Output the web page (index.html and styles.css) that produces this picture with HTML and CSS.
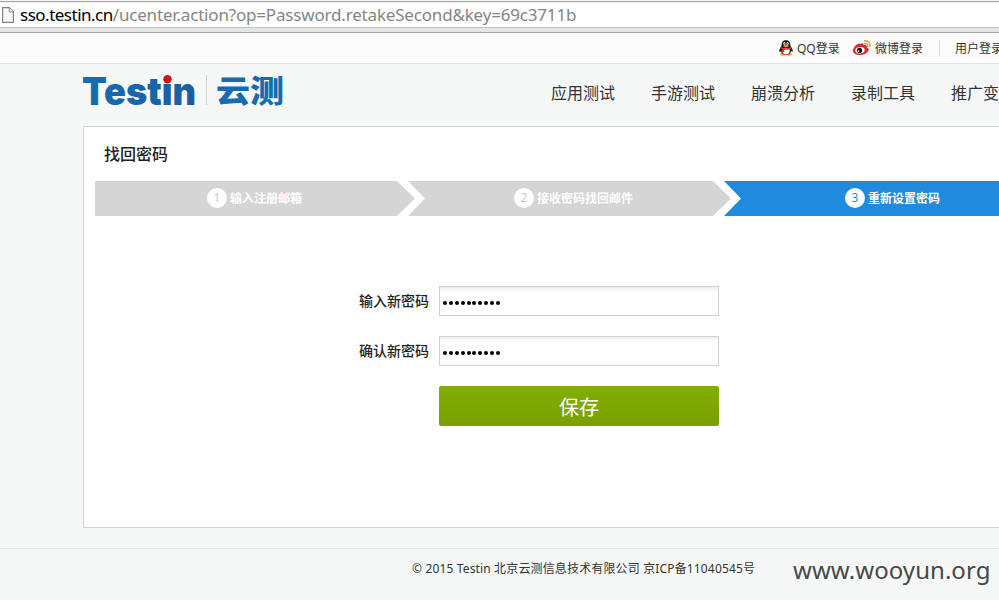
FILE: index.html
```html
<!DOCTYPE html>
<html lang="zh-CN">
<head>
<meta charset="utf-8">
<title>找回密码 - Testin云测</title>
<link rel="stylesheet" href="styles.css">
</head>
<body>
<div class="address">
  <svg class="page-icon" width="12" height="16" viewBox="0 0 12 16"><path d="M.6.6h6.7l4.1 4.2v10.6H.6z" fill="#f8f8f8" stroke="#858585" stroke-width="1.2"/><path d="M7.2.8v4.1h4" fill="#fff" stroke="#858585"/></svg>
  <span class="url"><b>sso.testin.cn</b>/ucenter.action?op=Password.retakeSecond&amp;key=69c3711b</span>
</div>
<div class="topbar">
  <a class="login qq"><svg width="16" height="16" viewBox="0 0 16 16"><ellipse cx="5" cy="14.4" rx="3" ry="1.4" fill="#f5a623"/><ellipse cx="11" cy="14.4" rx="3" ry="1.4" fill="#f5a623"/><path d="M3.500 6C3.500 2 5 .2 8 .2S12.500 2 12.500 6C14 8 15.200 10 14.500 12.200L13 11C12.500 14 10.500 14.600 8 14.600S3.500 14 3 11l-1.500 1.200C.8 10 2 8 3.500 6z" fill="#17171c"/><ellipse cx="8" cy="11" rx="3.700" ry="3.300" fill="#fff"/><ellipse cx="6.400" cy="3.600" rx="1.100" ry="1.500" fill="#fff"/><ellipse cx="9.600" cy="3.600" rx="1.100" ry="1.500" fill="#fff"/><circle cx="6.700" cy="3.800" r=".5"/><circle cx="9.300" cy="3.800" r=".5"/><ellipse cx="8" cy="6" rx="2.800" ry=".9" fill="#f5a623"/><path d="M3.300 7c2.700 1.600 6.700 1.600 9.400 0l.5 1.500c-2.300 1.300-4.900 1.500-7 1.200V12H4.100V9l-1.200-.6z" fill="#e3292c"/></svg><span>QQ登录</span></a>
  <a class="login weibo"><svg width="18" height="16" viewBox="0 0 18 16"><path d="M7 4c2-1.500 4-1 3.600 1.300 2-.7 3.900 0 3.100 2 5 2-.2 7.700-6.700 7.700C2.800 15 0 13 0 10.700 0 7 5.700 1.800 7 4z" fill="#d9292b"/><ellipse cx="7" cy="10.200" rx="4.700" ry="3.200" fill="#fff" transform="rotate(-7 7 10.200)"/><circle cx="6.500" cy="10.400" r="2.600" fill="#111"/><circle cx="5.500" cy="11.200" r=".9" fill="#fff"/><path d="M11.500 1c3.700-.7 6.200 2 5.200 5.500M11.700 3.500c2-.4 3.200 1 2.700 2.700" fill="none" stroke="#efa02c" stroke-width="1.500" stroke-linecap="round"/></svg><span>微博登录</span></a>
  <i class="divider"></i>
  <a class="login user"><span>用户登录</span></a>
</div>
<header class="header">
  <div class="logo">
    <svg width="210" height="52" viewBox="0 -10 210 52">
      <defs><linearGradient id="ink" x1="0" x2="1"><stop offset="0" stop-color="#146db5"/><stop offset="1" stop-color="#195f9f"/></linearGradient></defs>
      <text class="wordmark" x="-1" y="31" textLength="114" lengthAdjust="spacingAndGlyphs">Testin</text>
      <rect class="mask" x="76" y="0" width="17" height="10"/>
      <circle cx="84.500" cy="5.200" r="4.200" fill="#c9151e"/>
      <path d="M123.500 1v30" stroke="#d0d3d2"/>
      <text class="cn" transform="translate(133 28.300) scale(1 .9)" textLength="68" lengthAdjust="spacingAndGlyphs">云测</text>
    </svg>
  </div>
  <nav class="nav"><a>应用测试</a><a>手游测试</a><a>崩溃分析</a><a>录制工具</a><a>推广变现</a></nav>
</header>
<main class="panel">
  <h1>找回密码</h1>
  <div class="steps">
    <div class="step first"><i>1</i><span>输入注册邮箱</span></div>
    <div class="step second"><i>2</i><span>接收密码找回邮件</span></div>
    <div class="step third"><i>3</i><span>重新设置密码</span></div>
  </div>
  <form class="form">
    <div class="row"><label for="pw">输入新密码</label><div class="field" id="pw"><i></i><i></i><i></i><i></i><i></i><i></i><i></i><i></i><i></i><i></i></div></div>
    <div class="row"><label for="pw2">确认新密码</label><div class="field" id="pw2"><i></i><i></i><i></i><i></i><i></i><i></i><i></i><i></i><i></i><i></i></div></div>
    <button type="button">保存</button>
  </form>
</main>
<footer class="footer">
  <span class="copyright">© 2015 Testin 北京云测信息技术有限公司 京ICP备11040545号</span>
  <span class="site">www.wooyun.org</span>
</footer>
</body>
</html>
```
FILE: styles.css
```css
* { box-sizing: border-box; }
html, body { margin: 0; width: 999px; height: 600px; overflow: hidden; }
body { background: #f6f8f7; color: #333; font: 12px/18px "Noto Sans", "Noto Sans CJK SC", sans-serif; white-space: nowrap; }
i { font-style: normal; }
svg { display: block; flex: none; }

.address { height: 33px; padding: 5px 0 0 2px; display: flex; align-items: flex-start; gap: 6px; border-bottom: 1px solid #a4a4a4;
  background: linear-gradient(#f3f3f3 0 1px, #a9a9a9 1px 2px, #ededed 2px 3px, #fff 3px 27px, #c4c4c4 27px 28px, #e5e5e5 28px); }
.page-icon { margin-top: 2px; }
.url { color: #858585; font-size: 17px; line-height: 20px; letter-spacing: -.18px; }
.url b { color: #000; font-weight: 400; letter-spacing: -.5px; }

.topbar { height: 31px; padding-left: 778px; display: flex; align-items: center; background: #fcfcfc; border-bottom: 1px solid #e2e4e3; }
.login { display: flex; align-items: center; gap: 3px; flex: none; }
.login span { padding-top: 1px; }
.qq { width: 75px; }
.weibo { width: 86px; gap: 4px; }
.divider { width: 1px; height: 16px; background: #ddd; flex: none; }
.user { margin-left: 15px; }

.header { height: 62px; padding-left: 83px; display: flex; }
.logo { width: 468px; flex: none; }
.logo svg { overflow: visible; }
.wordmark { font: 900 38px Inter, sans-serif; fill: url(#ink); }
.cn { font: 900 34px "Noto Sans CJK SC", sans-serif; fill: #176cb1; }
.mask { fill: #f6f8f7; }
.nav { display: flex; gap: 36px; padding-top: 16px; font: 16px/24px "Noto Sans CJK SC", sans-serif; }
.nav a { width: 64px; flex: none; }

.panel { margin-left: 83px; width: 1000px; height: 402px; background: #fff; border: 1px solid #d2d5d4; padding: 0 11px; }
h1 { margin: 0; height: 54px; padding: 14px 0 0 9px; font: 500 16px/24px "Noto Sans CJK SC", sans-serif; color: #222; }
.steps { display: flex; }
.step { height: 35px; display: flex; align-items: center; justify-content: center; gap: 3px; flex: none; background: #d5d5d5; color: #fff; font-weight: 700; }
.step i { width: 20px; height: 20px; margin-top: -1px; border-radius: 50%; background: #fff; color: #c9c9c9; font-weight: 400; line-height: 20px; text-align: center; }
.first { width: 320px; padding-right: 1px; clip-path: polygon(0 0, 302px 0, 100% 50%, 302px 100%, 0 100%); }
.second { width: 323px; margin-left: -7px; padding-left: 8px; clip-path: polygon(0 0, 305px 0, 100% 50%, 305px 100%, 0 100%, 17px 50%); }
.third { width: 347px; margin-left: -7px; padding-right: 10px; background: #1f8bda; clip-path: polygon(0 0, 100% 0, 100% 100%, 0 100%, 17px 50%); }
.third i { color: #1f8bda; }

.form { width: 360px; margin: 70px 0 0 264px; display: flex; flex-direction: column; gap: 20px; }
.row { height: 30px; display: flex; align-items: center; justify-content: space-between; }
label { margin-top: -2px; font: 500 14px/20px "Noto Sans CJK SC", sans-serif; color: #222; }
.field { width: 280px; height: 30px; padding: 3px 0 0 3px; display: flex; align-items: center; gap: 1.9px; border: 1px solid #d0d0d0; background: linear-gradient(#ededed, #fff 5px); }
.field i { width: 4px; height: 4px; border-radius: 50%; background: #000; }
button { width: 280px; height: 40px; padding: 1px 0 0; align-self: flex-end; border: 0; border-radius: 2px; background: linear-gradient(#82ae00, #7aa000); color: #fff; font: 20px/39px "Noto Sans CJK SC", sans-serif; }

.footer { margin-top: 20px; height: 52px; padding-left: 412px; border-top: 1px solid #e1e3e2; display: flex; }
.copyright { width: 381px; padding-top: 11px; flex: none; letter-spacing: .15px; }
.site { padding-top: 4px; color: #484848; font-size: 24px; line-height: 34px; letter-spacing: .05px; }
```
